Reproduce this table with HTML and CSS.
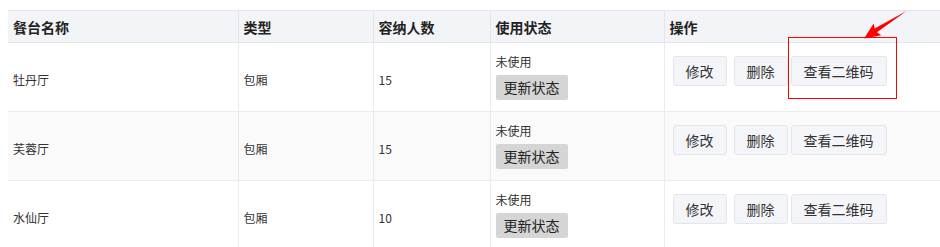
FILE: index.html
```html
<!DOCTYPE html>
<html lang="zh-CN">
<head>
<meta charset="utf-8">
<title>餐台管理</title>
<link rel="stylesheet" href="styles.css">
</head>
<body>
<div class="page">
  <table class="grid">
    <colgroup>
      <col class="c-name"><col class="c-type"><col class="c-cap"><col class="c-status"><col class="c-ops">
    </colgroup>
    <thead>
      <tr><th>餐台名称</th><th>类型</th><th>容纳人数</th><th>使用状态</th><th>操作</th></tr>
    </thead>
    <tbody>
      <tr>
        <td class="txt">牡丹厅</td><td class="txt">包厢</td><td class="txt">15</td>
        <td class="status-cell"><div class="status">未使用</div><button class="btn-state">更新状态</button></td>
        <td class="ops-cell"><div class="ops"><button class="btn btn-edit">修改</button><button class="btn btn-del">删除</button><button class="btn">查看二维码</button></div></td>
      </tr>
      <tr class="alt">
        <td class="txt">芙蓉厅</td><td class="txt">包厢</td><td class="txt">15</td>
        <td class="status-cell"><div class="status">未使用</div><button class="btn-state">更新状态</button></td>
        <td class="ops-cell"><div class="ops"><button class="btn btn-edit">修改</button><button class="btn btn-del">删除</button><button class="btn">查看二维码</button></div></td>
      </tr>
      <tr>
        <td class="txt">水仙厅</td><td class="txt">包厢</td><td class="txt">10</td>
        <td class="status-cell"><div class="status">未使用</div><button class="btn-state">更新状态</button></td>
        <td class="ops-cell"><div class="ops"><button class="btn btn-edit">修改</button><button class="btn btn-del">删除</button><button class="btn">查看二维码</button></div></td>
      </tr>
    </tbody>
  </table>
  <div class="mark-box"></div>
  <svg class="mark-arrow" width="940" height="60" viewBox="0 0 940 60">
    <polygon fill="#ff0000" points="864,38.5 873.7,23.4 874.6,28.5 906.5,11 877,32.3 881.3,35.2"/>
  </svg>
</div>
</body>
</html>
```
FILE: styles.css
```css
html, body {
  margin: 0;
  padding: 0;
  background: #ffffff;
}
body {
  font-family: "Noto Sans CJK SC", "Noto Sans", sans-serif;
  color: #333333;
}
.page {
  position: relative;
  padding: 10px 0 0 8px;
}
.grid {
  width: 932px;
  border-collapse: collapse;
  table-layout: fixed;
}
.c-name { width: 230px; }
.c-type { width: 135px; }
.c-cap { width: 117px; }
.c-status { width: 174px; }
.c-ops { width: 276px; }
.grid th {
  height: 31px;
  padding: 0 5px;
  text-align: left;
  font-size: 14px;
  font-weight: 700;
  color: #222222;
  background: #f3f4f8;
  border-top: 1px solid #e3e5eb;
  border-bottom: 1px solid #e3e5eb;
  border-left: 1px solid #e3e5eb;
  line-height: 18px;
}
.grid th:first-child, .grid td:first-child { border-left: none; }
.grid td {
  height: 68px;
  padding: 0 5px;
  font-size: 12px;
  line-height: 18px;
  vertical-align: middle;
  border-bottom: 1px solid #ebebef;
  border-left: 1px solid #ebebef;
  box-sizing: border-box;
}
.grid td.txt { padding-top: 6px; }
.grid td.status-cell { padding-top: 2px; }
.grid td.ops-cell { padding-bottom: 12px; }
.grid tbody tr { height: 69px; }
.grid tr.alt td { background: #fafafa; }
.status {
  font-size: 12px;
  line-height: 18px;
  margin-bottom: 4px;
}
.btn-state {
  display: block;
  height: 25px;
  padding: 0 8px;
  border: none;
  border-radius: 2px;
  background: #d5d5d5;
  color: #222222;
  font-family: inherit;
  font-size: 14px;
  line-height: 25px;
  margin-bottom: 4px;
}
.ops {
  display: flex;
  align-items: center;
  padding-left: 3px;
}
.btn {
  height: 30px;
  padding: 0 12px;
  border: 1px solid #e3e5ea;
  border-radius: 3px;
  background: #f4f5f9;
  color: #333333;
  font-family: inherit;
  font-size: 14px;
  line-height: 28px;
}
.btn-edit { margin-right: 7px; }
.btn-del { margin-right: 3px; }
.mark-box {
  position: absolute;
  left: 788px;
  top: 37px;
  width: 107px;
  height: 60px;
  border: 1px solid #ff0000;
}
.mark-arrow {
  position: absolute;
  left: 0;
  top: 0;
}
```
